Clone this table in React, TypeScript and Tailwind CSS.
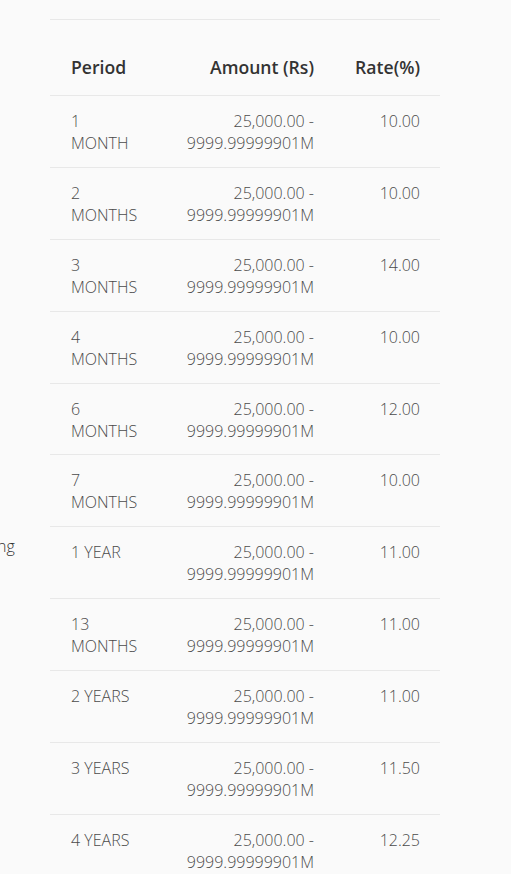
const rates = [
  { period: ['1', 'MONTH'], rate: '10.00' },
  { period: ['2', 'MONTHS'], rate: '10.00' },
  { period: ['3', 'MONTHS'], rate: '14.00' },
  { period: ['4', 'MONTHS'], rate: '10.00' },
  { period: ['6', 'MONTHS'], rate: '12.00' },
  { period: ['7', 'MONTHS'], rate: '10.00' },
  { period: ['1 YEAR'], rate: '11.00' },
  { period: ['13', 'MONTHS'], rate: '11.00' },
  { period: ['2 YEARS'], rate: '11.00' },
  { period: ['3 YEARS'], rate: '11.50' },
  { period: ['4 YEARS'], rate: '12.25' },
];

export default function App() {
  return (
    <div
      className="flex min-h-screen bg-[#fafafa] text-[16px] leading-[22px]"
      style={{ fontFamily: '"Open Sans", "Noto Sans", sans-serif' }}
    >
      {/* tail of a label from the neighbouring column, clipped at the edge */}
      <div className="w-[50px] shrink-0 overflow-hidden">
        <p className="mt-[535px] -ml-[3px] whitespace-nowrap font-light text-[#333]">ng</p>
      </div>

      <div className="mt-[19px] w-[390px] border-t border-[#e8e8e8]">
        <div className="grid grid-cols-[114px_170px_106px] border-b border-[#e8e8e8] pt-[36px] pb-[17px] text-[17.6px] font-semibold text-[#333]">
          <div className="pl-[21px]">Period</div>
          <div className="pr-[20px] text-right">Amount (Rs)</div>
          <div className="pr-[20px] text-right">Rate(%)</div>
        </div>

        {rates.map((r, i) => (
          <div
            key={i}
            className="grid grid-cols-[114px_170px_106px] border-b border-[#e8e8e8] pt-[14px] pb-[12.9px] font-light text-[#4a4a4a]"
          >
            <div className="pl-[21px]">
              {r.period.map((line) => (
                <div key={line}>{line}</div>
              ))}
            </div>
            <div className="pr-[20px] text-right">
              <div>25,000.00 -</div>
              <div>9999.99999901M</div>
            </div>
            <div className="pr-[20px] text-right">{r.rate}</div>
          </div>
        ))}
      </div>
    </div>
  );
}
